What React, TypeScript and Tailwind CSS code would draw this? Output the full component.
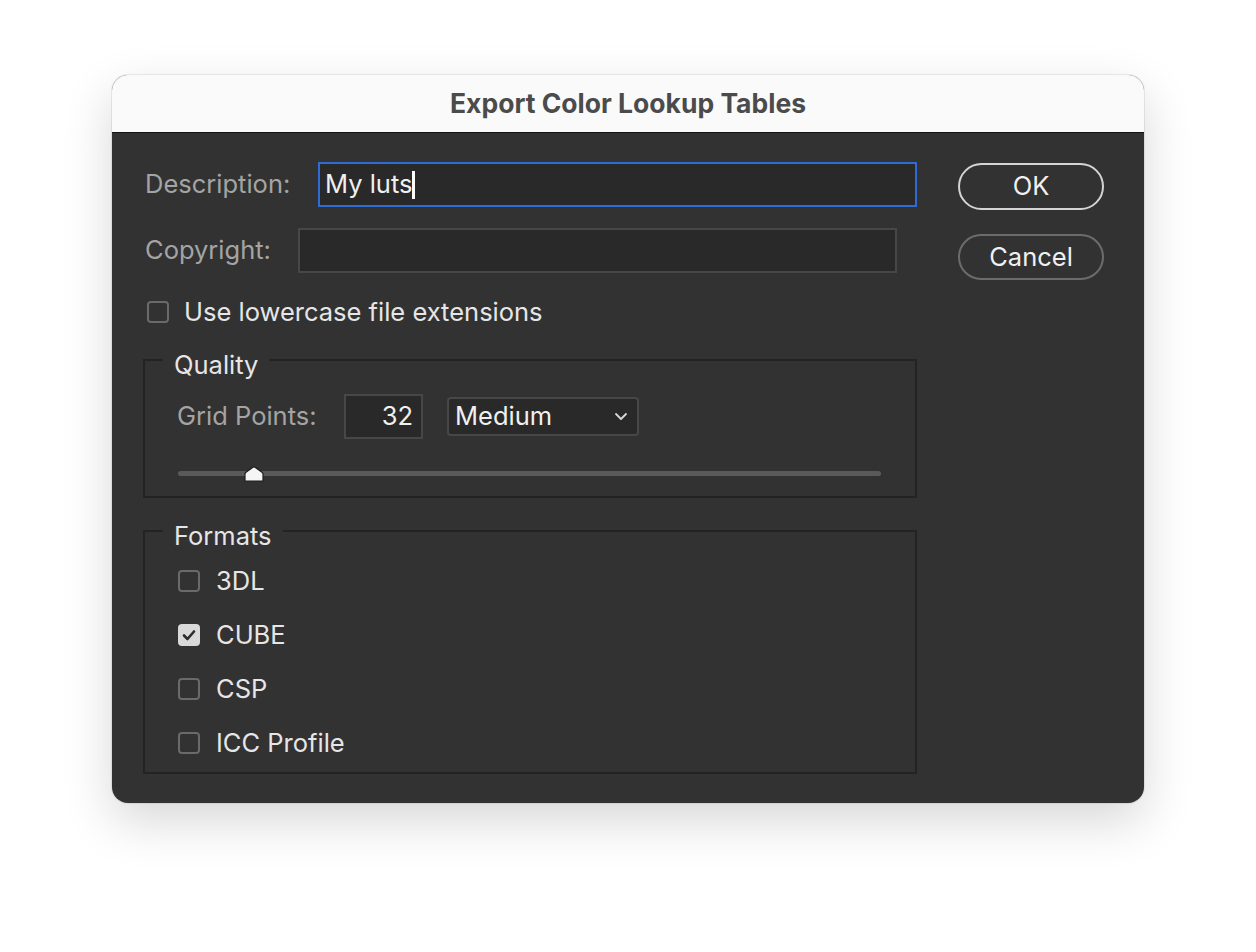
import React from 'react';

const font = { fontFamily: 'Inter, "Noto Sans", "Liberation Sans", sans-serif' };

function Checkbox({ checked = false, label, gap = 'ml-[16px]' }: { checked?: boolean; label: string; gap?: string }) {
  return (
    <div className="flex items-center">
      {checked ? (
        <div className="w-[22px] h-[22px] rounded-[4px] bg-[#d9d9d9] flex items-center justify-center">
          <svg width="16" height="16" viewBox="0 0 16 16" fill="none">
            <path d="M3 8.5 L6.5 12 L13 4.5" stroke="#2c2c2c" strokeWidth="2.6" strokeLinecap="round" strokeLinejoin="round" />
          </svg>
        </div>
      ) : (
        <div className="w-[22px] h-[22px] rounded-[4px] border-2 border-[#6a6a6a]" />
      )}
      <span className={`${gap} text-[25.5px] leading-none text-[#e6e6e6]`}>{label}</span>
    </div>
  );
}

export default function App() {
  return (
    <div className="w-[1256px] h-[952px] bg-white pt-[75px] pl-[112px]" style={font}>
      <div className="w-[1032px] h-[728px] rounded-[16px] overflow-hidden bg-[#323232] shadow-[0_0_0_1px_rgba(0,0,0,0.07),0_18px_50px_rgba(0,0,0,0.16)]">
        {/* title bar */}
        <div className="h-[58px] bg-[#fafafa] border-b border-[#141414] flex items-center justify-center">
          <span className="text-[26.5px] font-bold text-[#4b4b4b]">Export Color Lookup Tables</span>
        </div>

        <div className="flex pt-[29px] pl-[33px]">
          <div className="w-[772px]">
            <div className="flex items-center h-[45px]">
              <span className="w-[173px] text-[25.5px] text-[#a4a4a4]">Description:</span>
              <div className="w-[599px] h-[45px] border-2 border-[#2f6bd4] bg-[#292929] flex items-center pl-[5px]">
                <span className="text-[25.5px] text-[#f0f0f0]">My luts</span>
                <span className="inline-block w-[3px] h-[28px] bg-white" />
              </div>
            </div>

            <div className="flex items-center h-[45px] mt-[21px]">
              <span className="w-[153px] text-[25.5px] text-[#a4a4a4]">Copyright:</span>
              <div className="w-[599px] h-[45px] border-2 border-[#474747] bg-[#292929]" />
            </div>

            <div className="mt-[26px] ml-[2px]">
              <Checkbox label="Use lowercase file extensions" gap="ml-[15px]" />
            </div>

            <fieldset className="mt-[18px] -ml-[2px] w-[774px] border-2 border-[#232323] pb-[14px]">
              <legend className="ml-[18px] px-[11px] pt-[10px] leading-[24px] text-[25.5px] text-[#e6e6e6]">Quality</legend>
              <div className="pl-[32px]">
                <div className="mt-[17px] flex items-center h-[45px]">
                  <span className="w-[167px] text-[25.5px] text-[#a4a4a4]">Grid Points:</span>
                  <div className="w-[79px] h-[45px] border-2 border-[#474747] bg-[#292929] flex items-center justify-end pr-[8px]">
                    <span className="text-[25.5px] text-[#f0f0f0]">32</span>
                  </div>
                  <div className="ml-[24px] w-[192px] h-[39px] rounded-[4px] border-2 border-[#474747] bg-[#292929] flex items-center justify-between pl-[6px] pr-[9px]">
                    <span className="text-[25.5px] text-[#f0f0f0]">Medium</span>
                    <svg width="14" height="9" viewBox="0 0 14 9" fill="none">
                      <path d="M2 2 L7 7 L12 2" stroke="#d8d8d8" strokeWidth="1.8" strokeLinecap="round" strokeLinejoin="round" />
                    </svg>
                  </div>
                </div>
                <div className="mt-[27px] ml-[1px] w-[703px] h-[16px] flex items-center relative">
                  <div className="w-full h-[5px] rounded-full bg-[#5a5a5a]" />
                  <svg className="absolute left-[66px] top-0" width="20" height="16" viewBox="0 0 20 16">
                    <path d="M1 15 L1 8 Q1 7 2 6.2 L9 1.2 Q10 0.6 11 1.2 L18 6.2 Q19 7 19 8 L19 15 Z" fill="#f5f5f5" stroke="#1e1e1e" strokeWidth="1.2" />
                  </svg>
                </div>
              </div>
            </fieldset>

            <fieldset className="mt-[16px] -ml-[2px] w-[774px] border-2 border-[#232323] pb-[2px]">
              <legend className="ml-[18px] px-[11px] pt-[10px] leading-[24px] text-[25.5px] text-[#e6e6e6]">Formats</legend>
              <div className="mt-[6px] pl-[33px]">
                <div className="h-[54px] flex items-center"><Checkbox label="3DL" /></div>
                <div className="h-[54px] flex items-center"><Checkbox checked label="CUBE" /></div>
                <div className="h-[54px] flex items-center"><Checkbox label="CSP" /></div>
                <div className="h-[54px] flex items-center"><Checkbox label="ICC Profile" /></div>
              </div>
            </fieldset>
          </div>

          <div className="ml-[41px] w-[146px]">
            <button className="mt-[1px] w-[146px] h-[47px] rounded-full border-2 border-[#d4d4d4] text-[25.5px] text-[#f0f0f0] flex items-center justify-center">
              OK
            </button>
            <button className="mt-[24px] w-[146px] h-[46px] rounded-full border-2 border-[#6c6c6c] text-[25.5px] text-[#f0f0f0] flex items-center justify-center">
              Cancel
            </button>
          </div>
        </div>
      </div>
    </div>
  );
}
